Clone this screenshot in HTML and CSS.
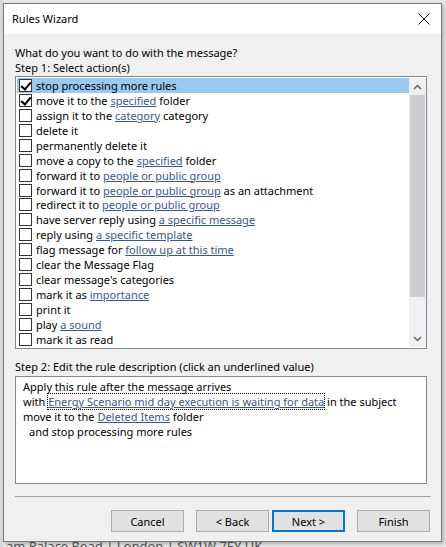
FILE: index.html
```html
<!DOCTYPE html>
<html>
<head>
<meta charset="utf-8">
<link rel="stylesheet" href="styles.css">
</head>
<body>
<div class="screen">
  <div class="dialog">
    <div class="titlebar">
      <span class="title">Rules Wizard</span>
      <svg class="close" width="12" height="12" viewBox="0 0 12 12"><path d="M0.5 0.5 L11.5 11.5 M11.5 0.5 L0.5 11.5" stroke="#1a1a1a" stroke-width="1" fill="none"/></svg>
    </div>
    <div class="body">
      <div class="label first">What do you want to do with the message?</div>
      <div class="label">Step 1: Select action(s)</div>
      <div class="listbox">
        <div class="rows">
          <div class="row selected"><span class="cb checked"></span><span>stop processing more rules</span></div>
          <div class="row"><span class="cb checked"></span><span>move it to the <a>specified</a> folder</span></div>
          <div class="row"><span class="cb"></span><span>assign it to the <a>category</a> category</span></div>
          <div class="row"><span class="cb"></span><span>delete it</span></div>
          <div class="row"><span class="cb"></span><span>permanently delete it</span></div>
          <div class="row"><span class="cb"></span><span>move a copy to the <a>specified</a> folder</span></div>
          <div class="row"><span class="cb"></span><span>forward it to <a>people or public group</a></span></div>
          <div class="row"><span class="cb"></span><span>forward it to <a>people or public group</a> as an attachment</span></div>
          <div class="row"><span class="cb"></span><span>redirect it to <a>people or public group</a></span></div>
          <div class="row"><span class="cb"></span><span>have server reply using <a>a specific message</a></span></div>
          <div class="row"><span class="cb"></span><span>reply using <a>a specific template</a></span></div>
          <div class="row"><span class="cb"></span><span>flag message for <a>follow up at this time</a></span></div>
          <div class="row"><span class="cb"></span><span>clear the Message Flag</span></div>
          <div class="row"><span class="cb"></span><span>clear message's categories</span></div>
          <div class="row"><span class="cb"></span><span>mark it as <a>importance</a></span></div>
          <div class="row"><span class="cb"></span><span>print it</span></div>
          <div class="row"><span class="cb"></span><span>play <a>a sound</a></span></div>
          <div class="row"><span class="cb"></span><span>mark it as read</span></div>
        </div>
        <div class="scrollbar">
          <div class="arrow"><svg width="9" height="6" viewBox="0 0 9 6"><path d="M1 5 L4.5 1.5 L8 5" stroke="#606060" stroke-width="1.5" fill="none"/></svg></div>
          <div class="thumb"></div>
          <div class="track"></div>
          <div class="arrow"><svg width="9" height="6" viewBox="0 0 9 6"><path d="M1 1 L4.5 4.5 L8 1" stroke="#606060" stroke-width="1.5" fill="none"/></svg></div>
        </div>
      </div>
      <div class="label step2">Step 2: Edit the rule description (click an underlined value)</div>
      <div class="descbox">
        <div class="line">Apply this rule after the message arrives</div>
        <div class="line">with <a class="focus">Energy Scenario mid day execution is waiting for data</a> in the subject</div>
        <div class="line">move it to the <a>Deleted Items</a> folder</div>
        <div class="line indent">and stop processing more rules</div>
      </div>
      <div class="separator"></div>
      <div class="buttons">
        <button class="btn">Cancel</button>
        <button class="btn back">&lt; Back</button>
        <button class="btn default">Next &gt;</button>
        <button class="btn finish">Finish</button>
      </div>
    </div>
  </div>
  <div class="behind">am Palace Road | London | SW1W 7EY UK</div>
</div>
</body>
</html>
```
FILE: styles.css
```css
* { box-sizing: border-box; }
html, body { margin: 0; padding: 0; }
body {
  width: 446px;
  height: 547px;
  overflow: hidden;
  background: #e6e6e6;
  font-family: "Noto Sans", "Open Sans", sans-serif;
  font-size: 11px;
  color: #000;
}
.screen {
  position: relative;
  width: 446px;
  height: 547px;
  padding: 3px 0 0 3px;
  background: linear-gradient(90deg, #d9d9d9 0, #d9d9d9 3px, #e9e9e9 3px);
}
.dialog {
  width: 439px;
  height: 539px;
  border: 1px solid #7a7a7a;
  background: #f0f0f0;
  box-shadow: 2px 2px 4px rgba(0,0,0,0.25);
  display: flex;
  flex-direction: column;
  position: relative;
  z-index: 1;
}
.titlebar {
  height: 30px;
  background: #fff;
  display: flex;
  align-items: center;
  justify-content: space-between;
  padding: 0 11px 0 8px;
}
.title { font-size: 11px; line-height: 14px; }
.close { display: block; }
.body {
  padding: 11px 14px 0 11px;
  display: flex;
  flex-direction: column;
}
.label { line-height: 15px; height: 15px; white-space: nowrap; }
.listbox {
  margin-top: 1px;
  height: 273px;
  border: 1px solid #828790;
  background: #fff;
  display: flex;
  padding: 1px 0 1px 1px;
}
.rows { flex: 1; display: flex; flex-direction: column; }
.row {
  height: 15px;
  display: flex;
  align-items: center;
  line-height: 15px;
  white-space: nowrap;
  overflow: hidden;
  padding-left: 2px;
}
.row.selected { background: #99c9ef; }
.cb {
  width: 13px;
  height: 13px;
  border: 1px solid #333;
  background: #fff;
  margin-right: 4px;
  flex: none;
  position: relative;
}
.cb.checked::after {
  content: "";
  position: absolute;
  left: 3px;
  top: 0px;
  width: 4px;
  height: 8px;
  border-right: 2px solid #000;
  border-bottom: 2px solid #000;
  transform: rotate(40deg);
}
a {
  color: #35598f;
  text-decoration: underline;
}
.scrollbar {
  width: 17px;
  display: flex;
  flex-direction: column;
  background: #f0f0f0;
}
.arrow {
  height: 17px;
  display: flex;
  align-items: center;
  justify-content: center;
  background: #f0f0f0;
}
.thumb {
  height: 202px;
  margin: 0 1px;
  background: #cdcdcd;
}
.track { flex: 1; }
.step2 { margin-top: 10px; }
.descbox {
  margin-top: 2px;
  height: 108px;
  border: 1px solid #828790;
  background: #fff;
  padding: 2px 0 0 7px;
}
.line { line-height: 15px; height: 15px; white-space: nowrap; }
.indent { padding-left: 6px; }
.focus { outline: 1px dotted #000; outline-offset: 0; }
.separator {
  margin-top: 12px;
  height: 1px;
  background: #a0a0a0;
  margin-right: -4px;
}
.buttons {
  margin-top: 13px;
  display: flex;
  justify-content: flex-end;
  margin-right: -3px;
}
.btn {
  width: 73px;
  height: 22px;
  border: 1px solid #adadad;
  background: #e1e1e1;
  font-family: inherit;
  font-size: 11px;
  color: #000;
  padding: 0;
  margin-left: 12px;
}
.btn.default {
  border: 2px solid #0078d7;
  margin-left: 3px;
}
.behind {
  position: absolute;
  left: 6px;
  top: 538px;
  font-size: 13px;
  color: #555;
  line-height: 16px;
  z-index: 0;
  white-space: nowrap;
}
```
